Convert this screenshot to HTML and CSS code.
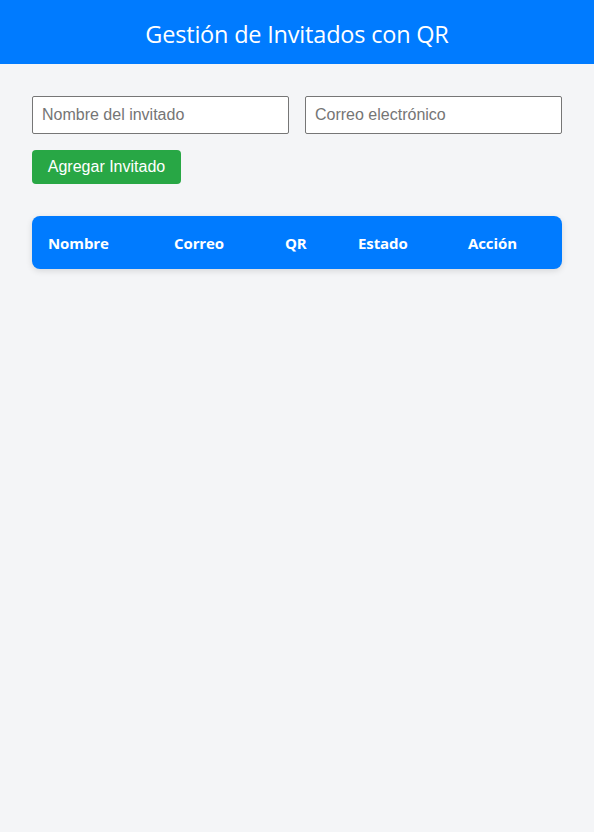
FILE: index.html
```html
<!DOCTYPE html>
<html lang="es">
<head>
<meta charset="utf-8">
<title>Gestión de Invitados con QR</title>
<link rel="stylesheet" href="styles.css">
</head>
<body>
<header class="topbar">
  <h1 class="title">Gestión de Invitados con QR</h1>
</header>
<main class="container">
  <div class="form-row">
    <input class="field" type="text" placeholder="Nombre del invitado">
    <input class="field" type="email" placeholder="Correo electrónico">
  </div>
  <button class="btn-add" type="button">Agregar Invitado</button>
  <div class="table-card">
    <table class="guests">
      <colgroup>
        <col class="c-nombre"><col class="c-correo"><col class="c-qr"><col class="c-estado"><col class="c-accion">
      </colgroup>
      <thead>
        <tr><th>Nombre</th><th>Correo</th><th>QR</th><th>Estado</th><th>Acción</th></tr>
      </thead>
      <tbody></tbody>
    </table>
  </div>
</main>
</body>
</html>
```
FILE: styles.css
```css
* { box-sizing: border-box; }
html, body { margin: 0; padding: 0; }
body {
  background: #f4f5f7;
  font-family: "Open Sans", "Noto Sans", sans-serif;
  min-height: 832px;
}
.topbar {
  background: #007bff;
  height: 64px;
  display: flex;
  align-items: center;
  justify-content: center;
  padding-top: 3px;
}
.title {
  margin: 0;
  color: #fff;
  font-weight: 400;
  font-size: 23.5px;
  letter-spacing: -0.2px;
}
.container {
  padding: 32px 32px;
}
.form-row {
  display: flex;
  gap: 16px;
}
.field {
  flex: 1;
  height: 38px;
  border: 1px solid #767676;
  border-radius: 2px;
  padding: 0 9px;
  font-family: "Liberation Sans", Arial, sans-serif;
  font-size: 16px;
  background: #fff;
  color: #222;
}
.field::placeholder { color: #757575; }
.btn-add {
  margin-top: 16px;
  height: 34px;
  width: 149px;
  background: #28a745;
  color: #fff;
  border: none;
  border-radius: 4px;
  font-family: "Liberation Sans", Arial, sans-serif;
  font-size: 16px;
  padding: 0;
}
.table-card {
  margin-top: 32px;
  background: #007bff;
  border-radius: 8px;
  box-shadow: 0 2px 6px rgba(0,0,0,0.12);
  overflow: hidden;
}
.guests {
  width: 100%;
  border-collapse: collapse;
  table-layout: fixed;
}
.c-nombre { width: 126px; }
.c-correo { width: 111px; }
.c-qr { width: 73px; }
.c-estado { width: 110px; }
.c-accion { width: 110px; }
.guests th {
  color: #fff;
  text-align: left;
  font-weight: 700;
  font-size: 15px;
  height: 53px;
  padding: 0 16px;
  letter-spacing: -0.1px;
}
```
